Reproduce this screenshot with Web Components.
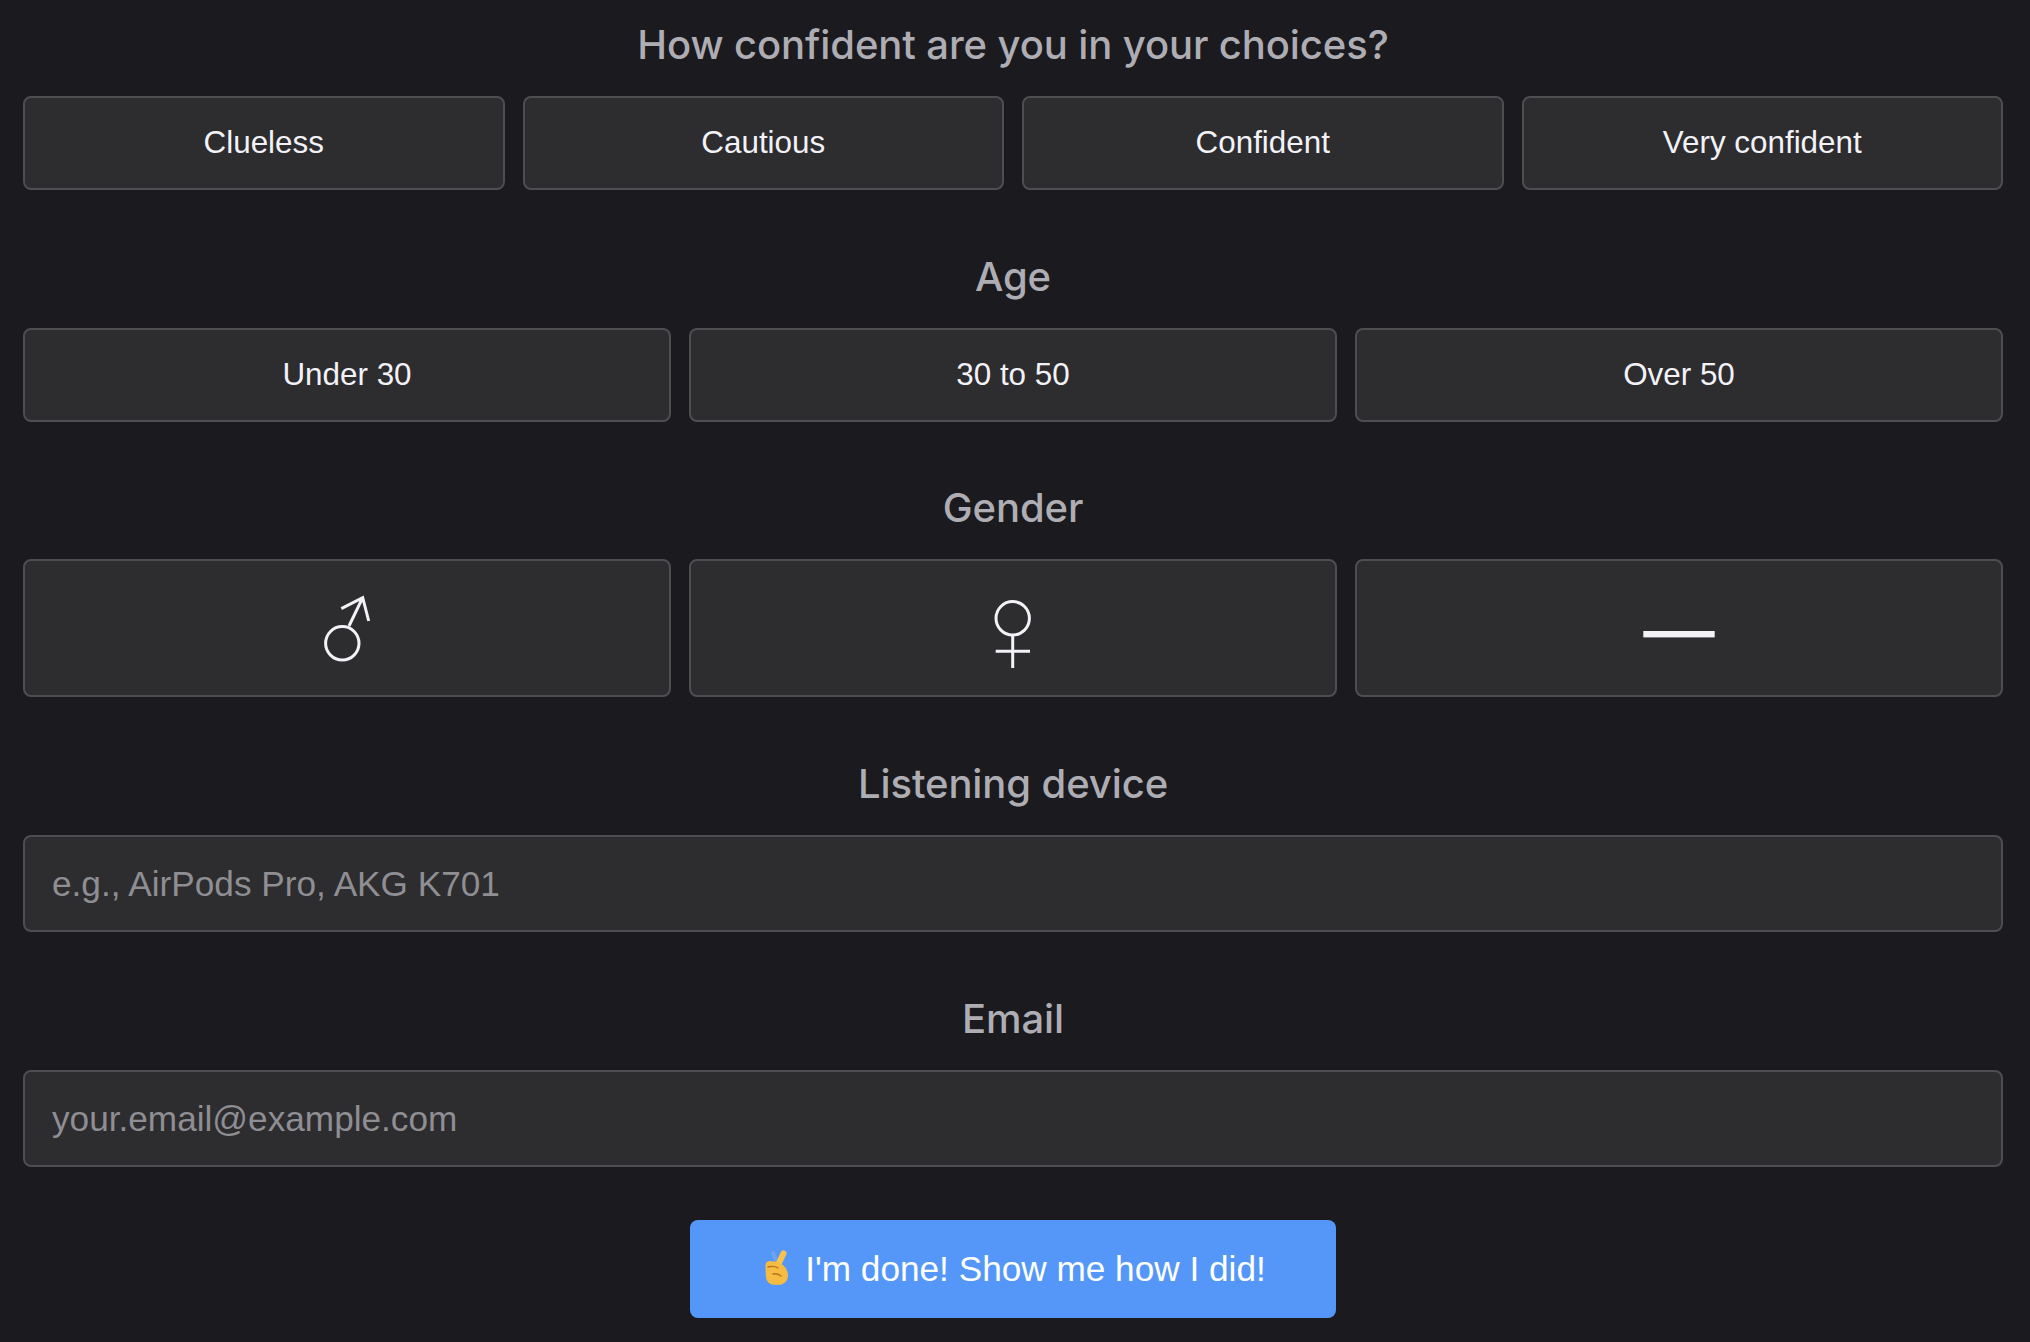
<!DOCTYPE html>
<html>
<head>
<meta charset="utf-8">
<title>Quiz</title>
<style>
  html, body { margin: 0; background: #1b1a1e; }
  body { font-family: "Liberation Sans", Arial, sans-serif; }
</style>
</head>
<body>
<survey-form>
  <survey-section label="How confident are you in your choices?" first>
    <choice-row cols="4">
      <choice-button>Clueless</choice-button>
      <choice-button>Cautious</choice-button>
      <choice-button>Confident</choice-button>
      <choice-button>Very confident</choice-button>
    </choice-row>
  </survey-section>
  <survey-section label="Age">
    <choice-row cols="3">
      <choice-button>Under 30</choice-button>
      <choice-button>30 to 50</choice-button>
      <choice-button>Over 50</choice-button>
    </choice-row>
  </survey-section>
  <survey-section label="Gender" tight>
    <choice-row cols="3">
      <choice-button tall>
        <svg width="60" height="80" viewBox="0 0 60 80" fill="none" stroke="#f2f2f7" stroke-width="3">
          <circle cx="25.3" cy="55.3" r="16.7"/>
          <path d="M32 38 L45.7 9.7 M24.3 20.7 L45.7 9.7 L51.7 33"/>
        </svg>
      </choice-button>
      <choice-button tall>
        <svg width="60" height="80" viewBox="0 0 60 80" fill="none" stroke="#f2f2f7" stroke-width="3">
          <circle cx="29.7" cy="30.3" r="16.7"/>
          <path d="M29.7 47 V80 M12.7 63.3 H47"/>
        </svg>
      </choice-button>
      <choice-button tall>
        <svg width="72" height="80" viewBox="0 0 72 80" fill="#f2f2f7">
          <rect x="0.3" y="43" width="71.4" height="6.4"/>
        </svg>
      </choice-button>
    </choice-row>
  </survey-section>
  <survey-section label="Listening device">
    <text-field placeholder="e.g., AirPods Pro, AKG K701"></text-field>
  </survey-section>
  <survey-section label="Email">
    <text-field placeholder="your.email@example.com"></text-field>
  </survey-section>
  <submit-button>I'm done! Show me how I did!</submit-button>
</survey-form>

<script>
class SurveyForm extends HTMLElement {
  constructor() {
    super();
    this.attachShadow({ mode: "open" });
    this.shadowRoot.innerHTML = `
      <style>
        :host { display: flex; flex-direction: column; box-sizing: border-box; width: 2030px; padding: 15px 27px 0 23px; }
      </style>
      <slot></slot>`;
  }
}
class SurveySection extends HTMLElement {
  constructor() {
    super();
    this.attachShadow({ mode: "open" });
    this.shadowRoot.innerHTML = `
      <style>
        :host { display: block; margin-top: 57px; }
        :host([tight]) { margin-top: 56px; }
        :host([first]) { margin-top: 0; }
        h2 { margin: 0 0 21px; height: 60px; text-align: center;
             font: 500 40px/60px Inter, "Liberation Sans", sans-serif; letter-spacing: -0.1px; color: #aeadb3; }
      </style>
      <h2></h2>
      <slot></slot>`;
    this.shadowRoot.querySelector("h2").textContent = this.getAttribute("label");
  }
}
class ChoiceRow extends HTMLElement {
  constructor() {
    super();
    this.attachShadow({ mode: "open" });
    this.shadowRoot.innerHTML = `
      <style>
        :host { display: grid; gap: 18px; grid-template-columns: repeat(var(--cols), 1fr); }
      </style>
      <slot></slot>`;
  }
  connectedCallback() {
    this.style.setProperty("--cols", this.getAttribute("cols"));
  }
}
class ChoiceButton extends HTMLElement {
  constructor() {
    super();
    this.attachShadow({ mode: "open" });
    this.shadowRoot.innerHTML = `
      <style>
        :host { display: flex; align-items: center; justify-content: center; box-sizing: border-box; height: 94px;
                background: #2d2c2f; border: 2px solid #4e4d51; border-radius: 8px;
                color: #f2f2f7; font-size: 31.4px; }
        :host([tall]) { height: 138px; }
      </style>
      <slot></slot>`;
  }
}
class TextField extends HTMLElement {
  constructor() {
    super();
    this.attachShadow({ mode: "open" });
    this.shadowRoot.innerHTML = `
      <style>
        :host { display: block; }
        input { display: block; box-sizing: border-box; width: 100%; height: 97px; padding: 0 27px;
                background: #2d2c2f; border: 2px solid #4e4d51; border-radius: 8px;
                color: #f2f2f7; font: 35.2px "Liberation Sans", Arial, sans-serif; outline: none; }
        input::placeholder { color: #8e8e93; opacity: 1; }
      </style>
      <input type="text">`;
    this.shadowRoot.querySelector("input").placeholder = this.getAttribute("placeholder");
  }
}
class SubmitButton extends HTMLElement {
  constructor() {
    super();
    this.attachShadow({ mode: "open" });
    this.shadowRoot.innerHTML = `
      <style>
        :host { display: flex; align-items: center; justify-content: center; gap: 17px; box-sizing: border-box;
                width: 646px; height: 98px; margin: 53px auto 0;
                background: #5497f9; border-radius: 8px; color: #fff; font-size: 35.2px; }
        svg { margin: 0 0 3px 5px; flex: none; }
      </style>
      <svg width="23" height="35" viewBox="0 0 23 35" stroke-linecap="round">
        <path d="M12 13 L8 3" stroke="#6ea3ee" stroke-width="4"/>
        <path d="M13 15 L18.5 3.5" stroke="#f8c34a" stroke-width="6"/>
        <path d="M0.5 17 Q0 11 5 11 L12 12 L18 15 Q23 19 23 25 Q23 35 11.5 35 Q1 35 0.8 26 Z" fill="#f6bb42"/>
        <path d="M3 17 Q9 15.5 13 18 M8 24 Q12 23 16 26" fill="none" stroke="#b9701f" stroke-width="1.3"/>
      </svg>
      <span><slot></slot></span>`;
  }
}
customElements.define("survey-form", SurveyForm);
customElements.define("survey-section", SurveySection);
customElements.define("choice-row", ChoiceRow);
customElements.define("choice-button", ChoiceButton);
customElements.define("text-field", TextField);
customElements.define("submit-button", SubmitButton);
</script>
</body>
</html>
